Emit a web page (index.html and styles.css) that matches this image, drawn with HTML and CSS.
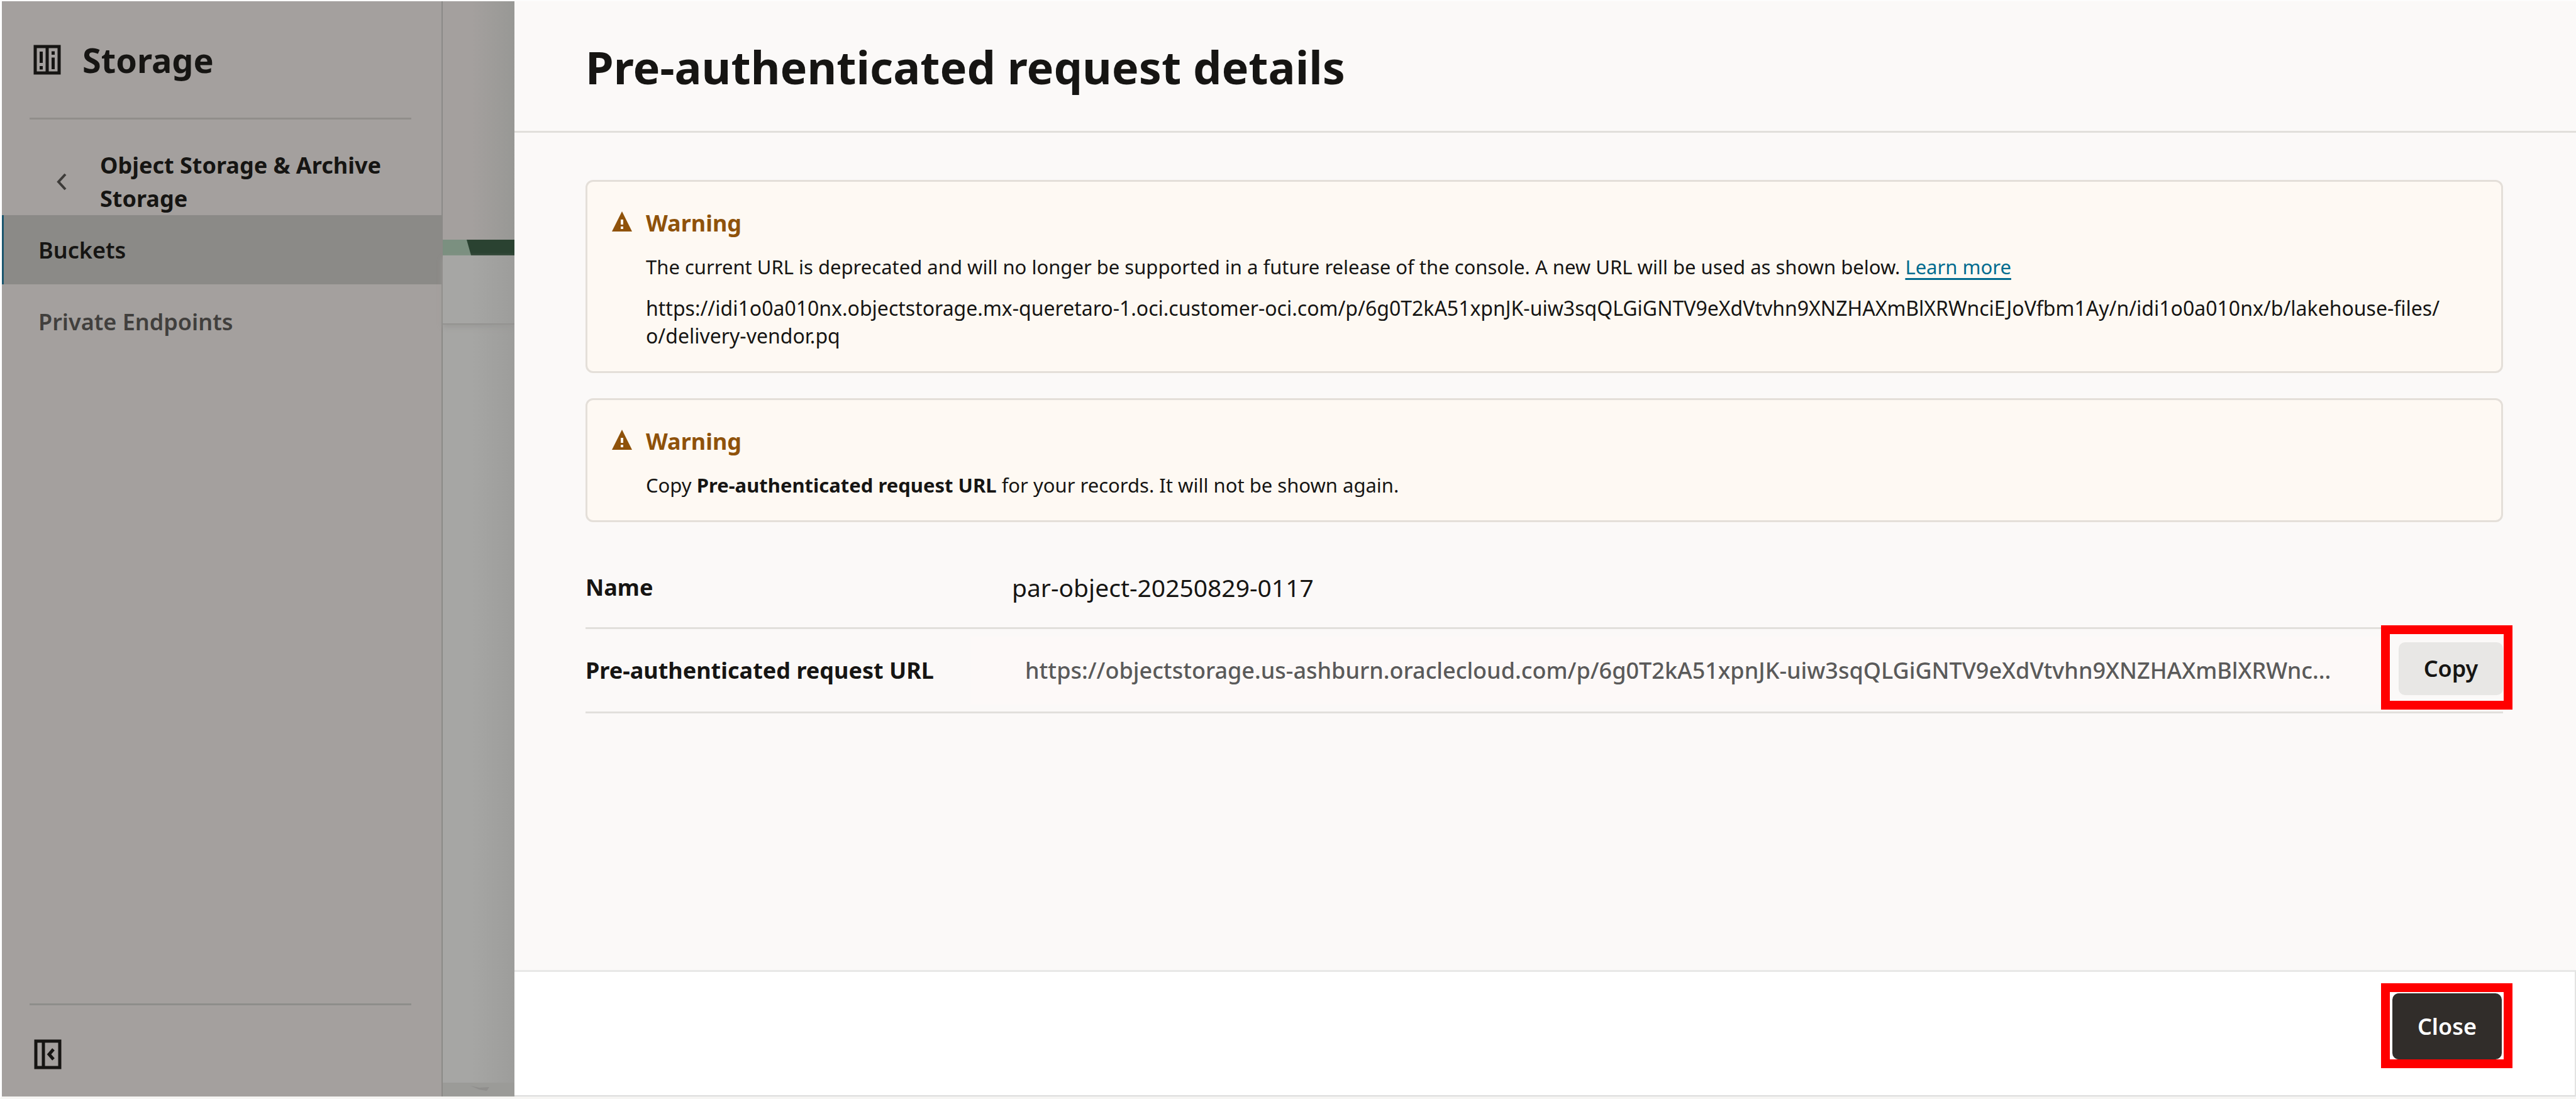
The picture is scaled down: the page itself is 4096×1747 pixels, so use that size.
FILE: index.html
```html
<!DOCTYPE html>
<html lang="en">
<head>
<meta charset="utf-8">
<title>Pre-authenticated request details</title>
<link rel="stylesheet" href="styles.css">
</head>
<body>
<div class="app">
  <nav class="sidebar" aria-label="Storage">
    <div class="sidebar-head">
      <svg class="icon-storage" viewBox="0 0 44 48" aria-hidden="true">
        <g fill="none" stroke="currentColor" stroke-width="5"><path d="M3 3H41V45H3ZM22 3V45"/><path d="M12.500 11V29M12.500 34V39.500M31.500 10.500V16M31.500 20.500V39"/></g>
      </svg>
      <h2 class="sidebar-title">Storage</h2>
    </div>
    <a class="back" href="#storage">
      <svg class="icon-back" viewBox="0 0 16 28" aria-hidden="true"><path d="M14 2 3 14 14 26" fill="none" stroke="currentColor" stroke-width="4"/></svg>
      <span class="back-label">Object Storage &amp; Archive Storage</span>
    </a>
    <a class="nav-item nav-item-active" href="#buckets">Buckets</a>
    <a class="nav-item" href="#endpoints">Private Endpoints</a>
    <div class="sidebar-foot">
      <button class="collapse" type="button" aria-label="Collapse menu">
        <svg class="icon-collapse" viewBox="0 0 44 48" aria-hidden="true"><path d="M3 3H41V45H3ZM15 3V45M31 16 24 24 31 32" fill="none" stroke="currentColor" stroke-width="5"/></svg>
      </button>
    </div>
  </nav>
  <div class="backdrop">
    <div class="backdrop-head"></div>
    <svg class="banner" viewBox="0 0 114 24" preserveAspectRatio="none" aria-hidden="true"><path fill="#7b9080" d="M0 0H114V24H0Z"/><path fill="#2a4231" d="M38 0H114V24H45Z"/></svg>
    <div class="backdrop-bar"></div>
    <div class="backdrop-body"></div>
    <div class="backdrop-foot">
      <svg class="smudge" viewBox="0 0 30 10" aria-hidden="true"><path fill="#8f8e8c" d="M0 1 14 4 30 3 26 9 14 7Z"/></svg>
    </div>
  </div>
  <main class="drawer">
    <header class="drawer-head"><h1 class="drawer-title">Pre-authenticated request details</h1></header>
    <div class="drawer-body">
      <section class="alert">
        <svg class="icon-warning" viewBox="0 0 32 32" aria-hidden="true"><path fill="#8f520a" fill-rule="evenodd" d="M16 0 32 32H0ZM14 13V21H18V13ZM14 24V28H18V24Z"/></svg>
        <div class="alert-text">
          <h2 class="alert-title">Warning</h2>
          <p class="alert-line">The current URL is deprecated and will no longer be supported in a future release of the console. A new URL will be used as shown below. <a class="link" href="#learn">Learn more</a></p>
          <p class="alert-line alert-url">https://idi1o0a010nx.objectstorage.mx-queretaro-1.oci.customer-oci.com/p/6g0T2kA51xpnJK-uiw3sqQLGiGNTV9eXdVtvhn9XNZHAXmBlXRWnciEJoVfbm1Ay/n/idi1o0a010nx/b/lakehouse-files/<wbr>o/delivery-vendor.pq</p>
        </div>
      </section>
      <section class="alert">
        <svg class="icon-warning" viewBox="0 0 32 32" aria-hidden="true"><path fill="#8f520a" fill-rule="evenodd" d="M16 0 32 32H0ZM14 13V21H18V13ZM14 24V28H18V24Z"/></svg>
        <div class="alert-text">
          <h2 class="alert-title">Warning</h2>
          <p class="alert-line">Copy <b class="strong">Pre-authenticated request URL</b> for your records. It will not be shown again.</p>
        </div>
      </section>
      <div class="details">
        <div class="row">
          <span class="label">Name</span>
          <span class="value">par-object-20250829-0117</span>
        </div>
        <div class="row row-url">
          <label class="label" for="par-url">Pre-authenticated request URL</label>
          <input class="url" id="par-url" type="text" readonly value="https://objectstorage.us-ashburn.oraclecloud.com/p/6g0T2kA51xpnJK-uiw3sqQLGiGNTV9eXdVtvhn9XNZHAXmBlXRWnc...">
          <div class="callout callout-row"><button class="btn btn-copy" type="button">Copy</button></div>
        </div>
      </div>
    </div>
    <footer class="drawer-foot">
      <div class="callout callout-foot"><button class="btn btn-close" type="button">Close</button></div>
    </footer>
  </main>
</div>
</body>
</html>
```
FILE: styles.css
```css
* { box-sizing: border-box; }

body {
  margin: 0;
  background: #f6f5f3;
  color: #161513;
  font-family: "Noto Sans", "Open Sans", sans-serif;
}

h1, h2, p { margin: 0; }

.app {
  display: flex;
  min-height: 100vh;
  border-top: 2px solid #fdfdfd;
  border-left: 3px solid #fdfdfd;
  border-bottom: 4px solid #f6f5f3;
}

/* Sidebar */
.sidebar {
  display: flex;
  flex-direction: column;
  flex: none;
  width: 701px;
  background: #a4a09e;
  border-right: 2px solid #8b8a87;
}

.sidebar-head {
  display: flex;
  align-items: center;
  gap: 34px;
  height: 188px;
  margin: 0 48px 0 44px;
  padding-left: 6px;
  border-bottom: 3px solid #918e8b;
}

.icon-storage, .icon-collapse { display: block; width: 44px; height: 48px; }

.sidebar-title { font-size: 54px; line-height: 60px; }

.back {
  display: flex;
  align-items: center;
  gap: 53px;
  padding: 46px 46px 0 87px;
  color: #161513;
  text-decoration: none;
}

.icon-back { flex: none; width: 16px; height: 28px; color: #3d3b39; }

.back-label { font-size: 36px; font-weight: 700; line-height: 53px; }

.nav-item {
  display: flex;
  align-items: center;
  height: 110px;
  margin-bottom: 4px;
  padding-left: 58px;
  color: #413f3d;
  font-size: 36px;
  font-weight: 600;
  text-decoration: none;
}

.nav-item-active {
  padding-left: 55px;
  background: #8b8a87;
  border-left: 3px solid #1b566e;
  color: #161513;
}

.sidebar-foot {
  height: 148px;
  margin: auto 48px 0 44px;
  padding: 54px 0 0 7px;
  border-top: 3px solid #8e8e8b;
}

.collapse { padding: 0; border: 0; background: none; color: #161513; }

/* Page behind the drawer */
.backdrop {
  display: flex;
  flex-direction: column;
  flex: none;
  width: 114px;
  background: linear-gradient(90deg, #a6a6a4 40%, #9d9d9b);
}

.backdrop-head { height: 379px; background: linear-gradient(90deg, #a4a09e 40%, #989895); }
.banner { display: block; width: 100%; height: 25px; }
.backdrop-bar { height: 110px; border-bottom: 2px solid #949391; box-shadow: 0 4px 8px #9a9997; }
.backdrop-body { flex: 1; }
.backdrop-foot { height: 22px; padding: 4px 0 0 44px; background: #9b9b98; }
.smudge { display: block; width: 30px; height: 10px; }

/* Drawer */
.drawer {
  display: flex;
  flex-direction: column;
  flex: 1;
  min-width: 0;
  background: #fbf9f8;
}

.drawer-head {
  height: 209px;
  padding: 54px 113px 0;
  border-bottom: 3px solid #e1dfdc;
}

.drawer-title { font-size: 72px; line-height: 100px; }

.drawer-body { flex: 1; padding: 75px 116px 0 113px; }

.alert {
  display: flex;
  gap: 22px;
  margin-bottom: 40px;
  padding: 41px 39px 34px;
  background: #fef9f3;
  border: 3px solid #e4dfd9;
  border-radius: 12px;
}

.icon-warning { flex: none; width: 32px; height: 32px; margin-top: 6px; }
.alert-text { min-width: 0; }
.alert-title { color: #8f520a; font-size: 36px; line-height: 50px; }
.alert-line { margin-top: 22px; font-size: 31px; line-height: 44px; }
.alert-url { font-size: 32px; }
.link { color: #006b8f; text-decoration: underline; text-decoration-thickness: 3px; text-underline-offset: 6px; }

.row {
  display: flex;
  align-items: center;
  min-height: 130px;
  border-bottom: 3px solid #e1dfdc;
}

.row-url { min-height: 134px; }

.label { flex: none; width: 612px; font-size: 36px; font-weight: 700; }
.value { padding-left: 66px; font-size: 39px; }

.url {
  flex: 1;
  min-width: 0;
  height: 108px;
  padding: 0 30px 0 87px;
  border: 0;
  background: #fdf9f8;
  color: #5a5a5a;
  font: 500 36px "Noto Sans", "Open Sans", sans-serif;
}

.btn {
  display: block;
  border: 0;
  border-radius: 10px;
  font: 600 36px "Noto Sans", "Open Sans", sans-serif;
}

.btn-copy { width: 166px; height: 84px; background: #e8e7e5; color: #161513; }
.btn-close { width: 174px; height: 105px; background: #312d2a; color: #fff; }

/* Red marker round a button */
.callout { position: relative; }

.callout::after {
  content: "";
  position: absolute;
  border: 14px solid #f00;
}

.callout-row { margin-bottom: 6px; padding-left: 28px; }
.callout-row::after { inset: -27px -15px -23px 0; }

.callout-foot { padding-left: 18px; }
.callout-foot::after { inset: -16px -17px -14px 0; }

.drawer-foot {
  display: flex;
  justify-content: flex-end;
  align-items: flex-start;
  height: 201px;
  padding: 34px 116px 0;
  background: #fff;
  border-top: 3px solid #e8e8e7;
  border-right: 2px solid #e3e3e2;
  border-bottom: 2px solid #dcdcdc;
}
```
